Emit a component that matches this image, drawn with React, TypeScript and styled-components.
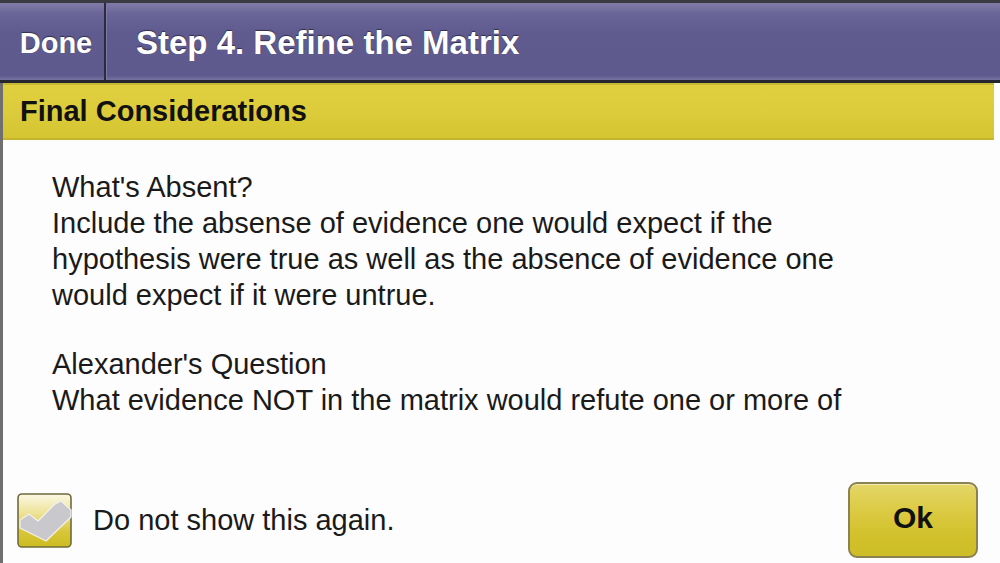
import styled, { createGlobalStyle } from "styled-components";

const GlobalStyle = createGlobalStyle`
  html, body {
    margin: 0;
    padding: 0;
    background: #ffffff;
    overflow: hidden;
  }
  body {
    font-family: "Liberation Sans", Arial, Helvetica, sans-serif;
  }
`;

const Screen = styled.div`
  width: 1000px;
  height: 563px;
  display: flex;
  flex-direction: column;
  overflow: hidden;
`;

const NavBar = styled.div`
  display: flex;
  height: 77px;
  border-top: 3px solid #3a3a40;
  border-bottom: 3px solid #262630;
  background: linear-gradient(
    to bottom,
    #807ba6 0%,
    #6a6597 14%,
    #605b8f 40%,
    #5f5a8e 94%,
    #77729f 100%
  );
`;

const NavButton = styled.div`
  width: 106px;
  box-sizing: border-box;
  display: flex;
  align-items: center;
  justify-content: center;
  border-right: 2px solid #2c2a40;
  color: #ffffff;
  font-size: 29px;
  font-weight: 700;
  padding: 3px 0 0 8px;
  text-shadow: 0 -1px 1px rgba(0, 0, 0, 0.5);
`;

const NavTitle = styled.div`
  flex: 1;
  display: flex;
  align-items: center;
  padding-left: 29px;
  border-left: 1px solid #7d79a4;
  color: #ffffff;
  font-size: 33px;
  font-weight: 700;
  padding-top: 2px;
  text-shadow: 0 -1px 1px rgba(0, 0, 0, 0.5);
`;

const Panel = styled.div`
  flex: 1;
  display: flex;
  flex-direction: column;
  border-left: 3px solid #6f6f6f;
  background: #fdfdfd;
  min-height: 0;
`;

const SectionBar = styled.div`
  height: 57px;
  display: flex;
  align-items: center;
  padding-left: 17px;
  margin-right: 6px;
  border-top: 2px solid #c8b935;
  border-bottom: 2px solid #c5b52d;
  background: linear-gradient(to bottom, #e0cf3e 0%, #dccb3a 50%, #d5c532 100%);
  color: #111111;
  font-size: 29px;
  font-weight: 700;
  box-sizing: border-box;
`;

const Body = styled.div`
  height: 279px;
  overflow: hidden;
  padding: 29px 0 0 49px;
  box-sizing: border-box;
  color: #1a1a1a;
  font-size: 29px;
  line-height: 36px;
`;

const Paragraph = styled.p`
  margin: 0 0 33px;
  max-width: 815px;
`;

const Footer = styled.div`
  flex: 1;
  display: flex;
  align-items: flex-end;
  justify-content: space-between;
  padding: 0 22px 5px 14px;
`;

const CheckRow = styled.label`
  display: flex;
  align-items: center;
  gap: 21px;
  height: 76px;
  color: #1a1a1a;
  font-size: 29px;
  margin-top: 6px;
`;

const CheckBox = styled.svg`
  width: 55px;
  height: 55px;
  display: block;
`;

const OkButton = styled.button`
  width: 130px;
  height: 76px;
  border: 2px solid #8a8250;
  border-radius: 9px;
  background: linear-gradient(to bottom, #e4d668 0%, #dccb45 35%, #d2c12c 70%, #cdbd26 100%);
  color: #111111;
  font-family: "Liberation Sans", Arial, sans-serif;
  font-size: 30px;
  font-weight: 700;
  padding: 0 0 4px;
  box-shadow: inset 0 1px 0 rgba(255, 255, 255, 0.5);
`;

const Check = () => (
  <CheckBox viewBox="0 0 55 55">
    <defs>
      <linearGradient id="cbFill" x1="0" y1="0" x2="0" y2="1">
        <stop offset="0" stopColor="#fbf8e4" />
        <stop offset="0.35" stopColor="#eee39a" />
        <stop offset="0.7" stopColor="#d8c73a" />
        <stop offset="1" stopColor="#cdbb22" />
      </linearGradient>
    </defs>
    <rect x="1" y="1" width="53" height="53" rx="4" fill="url(#cbFill)" stroke="#6f6a3c" strokeWidth="1.6" />
    <polygon
      points="3,27 12,21 21,28 38,11 44,8 54,17 54,24 29,48 3,35"
      fill="#c9c8cc"
      stroke="#f4f2ea"
      strokeWidth="1.2"
      strokeLinejoin="round"
    />
  </CheckBox>
);

export default function App() {
  return (
    <Screen>
      <GlobalStyle />
      <NavBar>
        <NavButton>Done</NavButton>
        <NavTitle>Step 4. Refine the Matrix</NavTitle>
      </NavBar>
      <Panel>
        <SectionBar>Final Considerations</SectionBar>
        <Body>
          <Paragraph>
            What's Absent?
            <br />
            Include the absense of evidence one would expect if the hypothesis were true as well as the
            absence of evidence one would expect if it were untrue.
          </Paragraph>
          <Paragraph>
            Alexander's Question
            <br />
            What evidence NOT in the matrix would refute one or more of
          </Paragraph>
        </Body>
        <Footer>
          <CheckRow>
            <Check />
            Do not show this again.
          </CheckRow>
          <OkButton>Ok</OkButton>
        </Footer>
      </Panel>
    </Screen>
  );
}
